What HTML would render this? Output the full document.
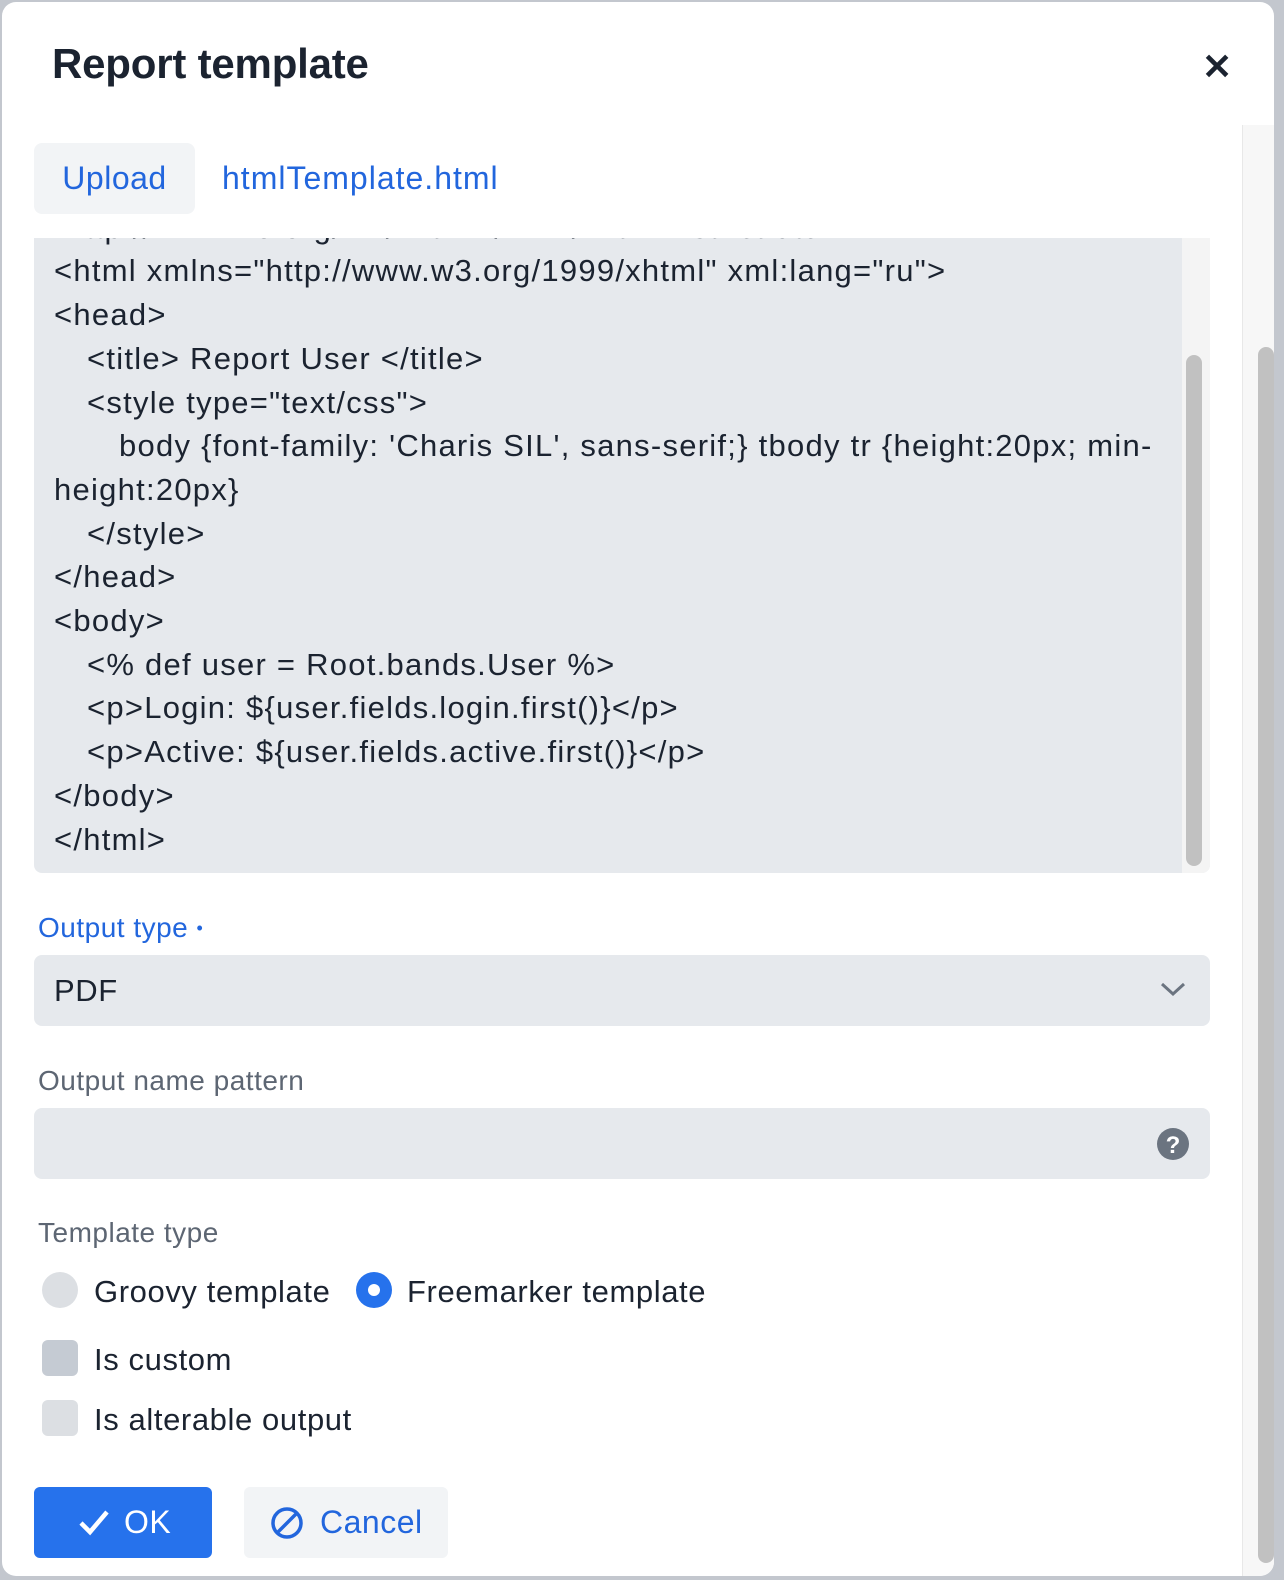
<!DOCTYPE html>
<html><head><style>
html,body{margin:0;padding:0;width:1284px;height:1580px;overflow:hidden;background:#c3c7ce;font-family:"Liberation Sans",sans-serif;}
.dlg{position:absolute;left:2px;top:2px;width:1272px;height:1574px;background:#fff;border-radius:14px;overflow:hidden;}
.title{position:absolute;left:50px;top:38px;font-size:42px;font-weight:bold;color:#1b2330;letter-spacing:-0.2px;}
.close{position:absolute;left:1200px;top:44px;font-size:36px;font-weight:bold;color:#1b2330;}
.otrack{position:absolute;left:1240px;top:123px;width:32px;height:1451px;background:#f7f7f7;border-left:1px solid #e8e8e8;}
.othumb{position:absolute;left:1256px;top:345px;width:16px;height:1216px;background:#c1c1c1;border-radius:8px;}
.upload{position:absolute;width:161px;height:71px;background:#f2f4f6;border-radius:8px;color:#2266dd;font-size:32px;letter-spacing:0.5px;line-height:71px;text-align:center;}
.fname{position:absolute;line-height:71px;font-size:32px;letter-spacing:1px;color:#2266dd;}
.code{position:absolute;width:1176px;height:635px;background:#e6e9ed;border-radius:0 0 8px 8px;overflow:hidden;}
.lines{position:absolute;left:20px;top:-76px;width:1300px;font-size:31px;letter-spacing:1.25px;line-height:43.7px;color:#1b2330;white-space:pre;}
.i{display:inline-block;width:33px}.i2{display:inline-block;width:65px}
.itrack{position:absolute;right:0;top:0;width:28px;height:635px;background:#f4f4f4;}
.ithumb{position:absolute;left:1152px;top:117px;width:16px;height:511px;background:#c1c1c1;border-radius:8px;}
.lbl{position:absolute;left:36px;font-size:28px;letter-spacing:0.5px;color:#5d6673;}
.field{position:absolute;width:1176px;height:71px;background:#e6e9ed;border-radius:8px;}
.opt{position:absolute;font-size:31px;letter-spacing:0.6px;color:#1b2330;}
.btn{position:absolute;height:71px;border-radius:6px;font-size:32px;letter-spacing:0.5px;line-height:71px;}
</style></head><body>
<div class="dlg">
<div class="title">Report template</div>
<div class="close">✕</div>
<div class="otrack"></div>
<div class="othumb"></div>
<div class="upload" style="left:32px;top:141px">Upload</div>
<div class="fname" style="left:220px;top:141px">htmlTemplate.html</div>
<div class="code" style="left:32px;top:236px">
<div class="lines">&lt;!DOCTYPE html PUBLIC "-//W3C//DTD XHTML 1.0 Strict//EN"
"http://www.w3.org/TR/xhtml1/DTD/xhtml1-strict.dtd"&gt;
&lt;html xmlns="http://www.w3.org/1999/xhtml" xml:lang="ru"&gt;
&lt;head&gt;
<span class="i"></span>&lt;title&gt; Report User &lt;/title&gt;
<span class="i"></span>&lt;style type="text/css"&gt;
<span class="i2"></span>body {font-family: 'Charis SIL', sans-serif;} tbody tr {height:20px; min-
height:20px}
<span class="i"></span>&lt;/style&gt;
&lt;/head&gt;
&lt;body&gt;
<span class="i"></span>&lt;% def user = Root.bands.User %&gt;
<span class="i"></span>&lt;p&gt;Login: ${user.fields.login.first()}&lt;/p&gt;
<span class="i"></span>&lt;p&gt;Active: ${user.fields.active.first()}&lt;/p&gt;
&lt;/body&gt;
&lt;/html&gt;</div>
<div class="itrack"></div>
<div class="ithumb"></div>
</div>
<div class="lbl" style="top:910px;color:#2266dd">Output type <span style="font-size:18px;vertical-align:3px">•</span></div>
<div class="field" style="left:32px;top:953px"><span style="position:absolute;left:20px;top:18px;font-size:31px;letter-spacing:0.6px;color:#1b2330">PDF</span>
<svg style="position:absolute;left:1126px;top:27px" width="26" height="16" viewBox="0 0 26 16"><path d="M2 2 L13 12 L24 2" fill="none" stroke="#6b7480" stroke-width="3"/></svg></div>
<div class="lbl" style="top:1063px">Output name pattern</div>
<div class="field" style="left:32px;top:1106px">
<svg style="position:absolute;left:1122px;top:19px" width="34" height="34" viewBox="0 0 34 34"><circle cx="17" cy="17" r="16" fill="#6b7480"/><text x="17" y="26" text-anchor="middle" font-family="Liberation Sans" font-weight="bold" font-size="24" fill="#fff">?</text></svg></div>
<div class="lbl" style="top:1215px">Template type</div>
<div style="position:absolute;left:40px;top:1270px;width:36px;height:36px;border-radius:50%;background:#dcdfe3"></div>
<div class="opt" style="left:92px;top:1272px">Groovy template</div>
<div style="position:absolute;left:354px;top:1270px;width:36px;height:36px;border-radius:50%;background:#2672ec"><div style="position:absolute;left:12px;top:12px;width:12px;height:12px;border-radius:50%;background:#fff"></div></div>
<div class="opt" style="left:405px;top:1272px">Freemarker template</div>
<div style="position:absolute;left:40px;top:1338px;width:36px;height:36px;border-radius:6px;background:#c5cbd3"></div>
<div class="opt" style="left:92px;top:1340px">Is custom</div>
<div style="position:absolute;left:40px;top:1398px;width:36px;height:36px;border-radius:6px;background:#dcdfe3"></div>
<div class="opt" style="left:92px;top:1400px">Is alterable output</div>
<div class="btn" style="left:32px;top:1485px;width:178px;background:#2672ec;color:#fff">
<svg style="position:absolute;left:44px;top:22px" width="32" height="28" viewBox="0 0 32 28"><path d="M3 14 L12 23 L29 3" fill="none" stroke="#fff" stroke-width="4.5"/></svg>
<span style="position:absolute;left:90px">OK</span></div>
<div class="btn" style="left:242px;top:1485px;width:204px;background:#f2f4f6;color:#2266dd">
<svg style="position:absolute;left:26px;top:19px" width="34" height="34" viewBox="0 0 34 34"><circle cx="17" cy="17" r="14" fill="none" stroke="#2266dd" stroke-width="3.5"/><path d="M7 27 L27 7" stroke="#2266dd" stroke-width="3.5"/></svg>
<span style="position:absolute;left:76px">Cancel</span></div>
</div>
</body></html>
